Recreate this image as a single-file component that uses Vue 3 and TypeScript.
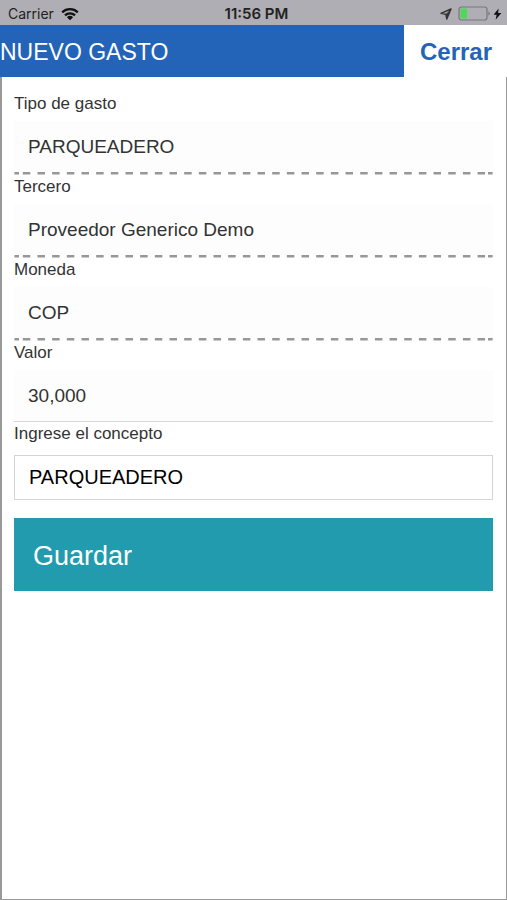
<script setup lang="ts">
import { ref } from 'vue'

interface Field {
  id: string
  label: string
  value: string
  dashed: boolean
}

const fields = ref<Field[]>([
  { id: 'tipo', label: 'Tipo de gasto', value: 'PARQUEADERO', dashed: true },
  { id: 'tercero', label: 'Tercero', value: 'Proveedor Generico Demo', dashed: true },
  { id: 'moneda', label: 'Moneda', value: 'COP', dashed: true },
  { id: 'valor', label: 'Valor', value: '30,000', dashed: false },
])
const concepto = ref('PARQUEADERO')
</script>

<template>
  <div class="screen">
    <div class="status">
      <div class="carrier">
        <span>Carrier</span>
        <svg width="18" height="14" viewBox="0 0 18 14" aria-hidden="true">
          <g fill="none" stroke="#111" stroke-width="2.3">
            <path d="M1.2 5.3a11.2 11.2 0 0 1 15.6 0" />
            <path d="M4 8.3a7.2 7.2 0 0 1 10 0" />
          </g>
          <path d="M9 13.2 5.9 10.2a4.5 4.5 0 0 1 6.2 0z" fill="#111" />
        </svg>
      </div>
      <span class="time">11:56 PM</span>
      <div class="power">
        <svg width="12" height="12" viewBox="0 0 12 12" aria-hidden="true">
          <path d="M11 1 1 5.4l4.8.8 1 4.8z" fill="none" stroke="#333" stroke-width="1.4" stroke-linejoin="round" />
          <path d="M11 1 5.8 6.2l1 4.8z" fill="#333" />
        </svg>
        <svg width="33" height="15" viewBox="0 0 33 15" aria-hidden="true">
          <rect x="1" y="1" width="28" height="13" rx="2.5" fill="none" stroke="#77777b" stroke-width="1.2" />
          <rect x="2.6" y="2.6" width="6.4" height="9.8" rx="1" fill="#4bdb57" />
          <path d="M30.4 5.2a2.6 2.6 0 0 1 0 4.6z" fill="#77777b" />
        </svg>
        <svg width="9" height="12" viewBox="0 0 9 12" aria-hidden="true">
          <path d="M5.6.4.6 6.8h3L2.6 11.8 8.4 5H5.1z" fill="#111" />
        </svg>
      </div>
    </div>

    <header class="header">
      <h1>NUEVO GASTO</h1>
      <button type="button" class="close">Cerrar</button>
    </header>

    <form class="panel" @submit.prevent>
      <div v-for="f in fields" :key="f.id" class="field">
        <label :for="f.id">{{ f.label }}</label>
        <input :id="f.id" v-model="f.value" type="text" readonly class="value" />
        <svg v-if="f.dashed" class="dashes" viewBox="0 0 479 3" preserveAspectRatio="none" aria-hidden="true">
          <g stroke="#979797" stroke-width="2.4">
            <path d="M0.4 1.3H5M474 1.3h4.6" />
            <path d="M8.8 1.3H472" stroke-dasharray="7.5 7.17" />
          </g>
        </svg>
        <div v-else class="rule"></div>
      </div>
      <label for="concepto">Ingrese el concepto</label>
      <input id="concepto" v-model="concepto" type="text" class="concept" />
      <button type="submit" class="save">Guardar</button>
    </form>
  </div>
</template>

<style>
body {
  margin: 0;
  background: #fff;
}
</style>

<style scoped>
.screen {
  display: flex;
  flex-direction: column;
  min-height: 100vh;
  font-family: "Liberation Sans", Arial, sans-serif;
  color: #333;
}

.screen * {
  box-sizing: border-box;
}

.status {
  display: grid;
  grid-template-columns: 1fr auto 1fr;
  align-items: center;
  height: 25px;
  padding: 2px 5px 0 8px;
  background: #afaeb4;
  font-family: Inter, sans-serif;
  font-size: 14px;
  color: #222;
}

.carrier,
.power {
  display: flex;
  align-items: center;
  gap: 7px;
}

.power {
  justify-content: flex-end;
  gap: 2px;
}

.power svg:first-child {
  margin-right: 4px;
}

.time {
  padding-left: 3px;
  font-size: 15px;
  font-weight: 600;
}

.header {
  display: flex;
  height: 52px;
  background: #2464b8;
}

h1 {
  flex: 1;
  margin: 0;
  font-size: 23px;
  font-weight: 400;
  line-height: 54px;
  color: #fff;
}

.close {
  padding: 2px 15px 0 16px;
  border: 0;
  background: #fff;
  font: bold 24px "Liberation Sans", Arial, sans-serif;
  color: #2464b8;
}

.panel {
  flex: 1;
  display: flex;
  flex-direction: column;
  padding: 17px 13px 0 12px;
  border: solid #999;
  border-width: 0 1px 1px 2px;
}

.field {
  display: flex;
  flex-direction: column;
  padding-bottom: 2px;
}

label {
  font-size: 17px;
  line-height: 20px;
}

input {
  width: 100%;
  margin: 0;
  border-radius: 0;
  font-family: inherit;
}

.value {
  height: 51px;
  margin: 7px 0 0;
  padding: 0 14px;
  border: 0;
  background: #fdfdfd;
  font-size: 19px;
  color: #333;
}

.dashes {
  display: block;
  width: 100%;
  height: 3px;
}

.rule {
  height: 1px;
  background: #d6d6d6;
}

.concept {
  height: 45px;
  margin: 11px 0 18px;
  padding: 0 14px;
  border: 1px solid #d4d4d4;
  background: #fff;
  font-size: 20px;
  color: #000;
}

.save {
  height: 73px;
  padding: 3px 19px 0;
  border: 0;
  background: #229bae;
  font-family: inherit;
  font-size: 27px;
  text-align: left;
  color: #fff;
}
</style>
